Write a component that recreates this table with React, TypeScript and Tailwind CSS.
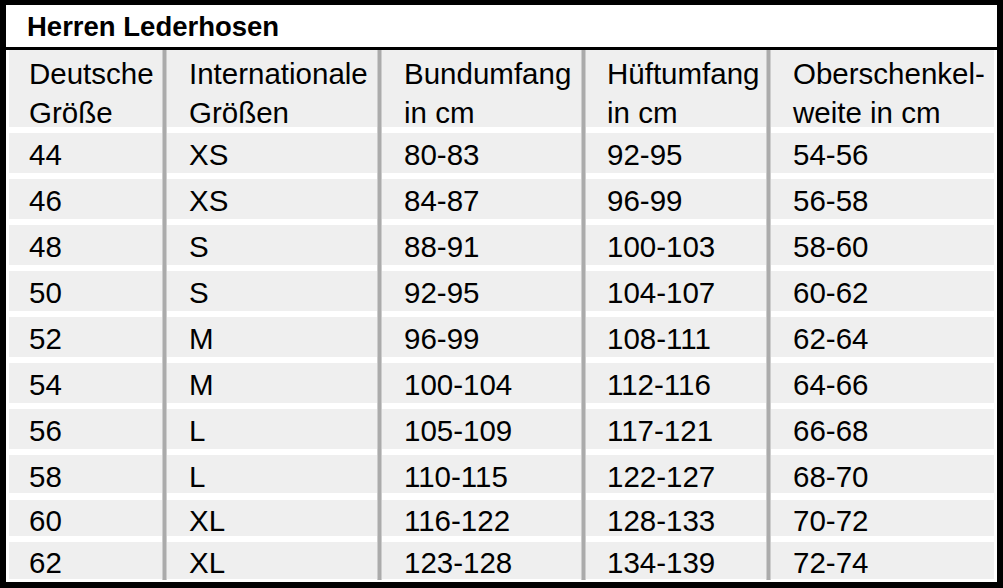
import React from "react";

type Column = {
    width: string;
    pad: string;
    head: [string, string];
    cells: string[];
};

const columns: Column[] = [
    {
        width: "w-[153px]",
        pad: "pl-[20px]",
        head: ["Deutsche", "Größe"],
        cells: ["44", "46", "48", "50", "52", "54", "56", "58", "60", "62"],
    },
    {
        width: "w-[210px]",
        pad: "pl-[22px]",
        head: ["Internationale", "Größen"],
        cells: ["XS", "XS", "S", "S", "M", "M", "L", "L", "XL", "XL"],
    },
    {
        width: "w-[199px]",
        pad: "pl-[22px]",
        head: ["Bundumfang", "in cm"],
        cells: ["80-83", "84-87", "88-91", "92-95", "96-99", "100-104", "105-109", "110-115", "116-122", "123-128"],
    },
    {
        width: "w-[180px]",
        pad: "pl-[21px]",
        head: ["Hüftumfang", "in cm"],
        cells: ["92-95", "96-99", "100-103", "104-107", "108-111", "112-116", "117-121", "122-127", "128-133", "134-139"],
    },
    {
        width: "w-[223px]",
        pad: "pl-[22px]",
        head: ["Oberschenkel-", "weite in cm"],
        cells: ["54-56", "56-58", "58-60", "60-62", "62-64", "64-66", "66-68", "68-70", "70-72", "72-74"],
    },
];

// row height + space above each data row (the screenshot gets tighter near the bottom)
const rowClasses = [
    "h-[39.5px] mt-[6px] pt-[7px]",
    "h-[39.5px] mt-[6.5px] pt-[7px]",
    "h-[39.5px] mt-[6.5px] pt-[7px]",
    "h-[39.5px] mt-[6.5px] pt-[7px]",
    "h-[39.5px] mt-[6.5px] pt-[7px]",
    "h-[39.5px] mt-[6.5px] pt-[7px]",
    "h-[39.5px] mt-[6.5px] pt-[7px]",
    "h-[38px] mt-[6.5px] pt-[6.5px]",
    "h-[36px] mt-[7px] pt-[6px]",
    "h-[36.5px] mt-[6px] pt-[6px]",
];

function Separator() {
    return <div className="w-[5px] self-stretch shrink-0 bg-[#ababab] border-x border-[#cdcdcd]" />;
}

function SizeColumn({ col }: { col: Column }) {
    return (
        <div className={`${col.width} shrink-0 flex flex-col`}>
            <div className={`h-[77px] bg-[#efefef] ${col.pad} pt-[3.5px] leading-[39px] whitespace-nowrap`}>
                <div>{col.head[0]}</div>
                <div>{col.head[1]}</div>
            </div>
            {col.cells.map((value, i) => (
                <div key={i} className={`${rowClasses[i]} bg-[#efefef] ${col.pad} leading-[29px] whitespace-nowrap`}>
                    {value}
                </div>
            ))}
        </div>
    );
}

export default function App() {
    return (
        <div className="w-[1003px] h-[588px] box-border bg-white border-black border-l-[6px] border-r-[6px] border-t-[5px] border-b-[6px] flex flex-col font-['Liberation_Sans',Arial,sans-serif] text-black overflow-hidden">
            {/* title bar */}
            <div className="h-[45px] shrink-0 border-b-[3px] border-black pl-[21px] pt-[1px] leading-[41px] text-[27.5px] font-bold">
                Herren Lederhosen
            </div>

            {/* size table */}
            <div className="flex-1 flex pl-[3px] pr-[4px] pb-[2px] text-[29.5px]">
                {columns.map((col, i) => (
                    <React.Fragment key={col.head[0]}>
                        {i > 0 && <Separator />}
                        <SizeColumn col={col} />
                    </React.Fragment>
                ))}
            </div>
        </div>
    );
}
